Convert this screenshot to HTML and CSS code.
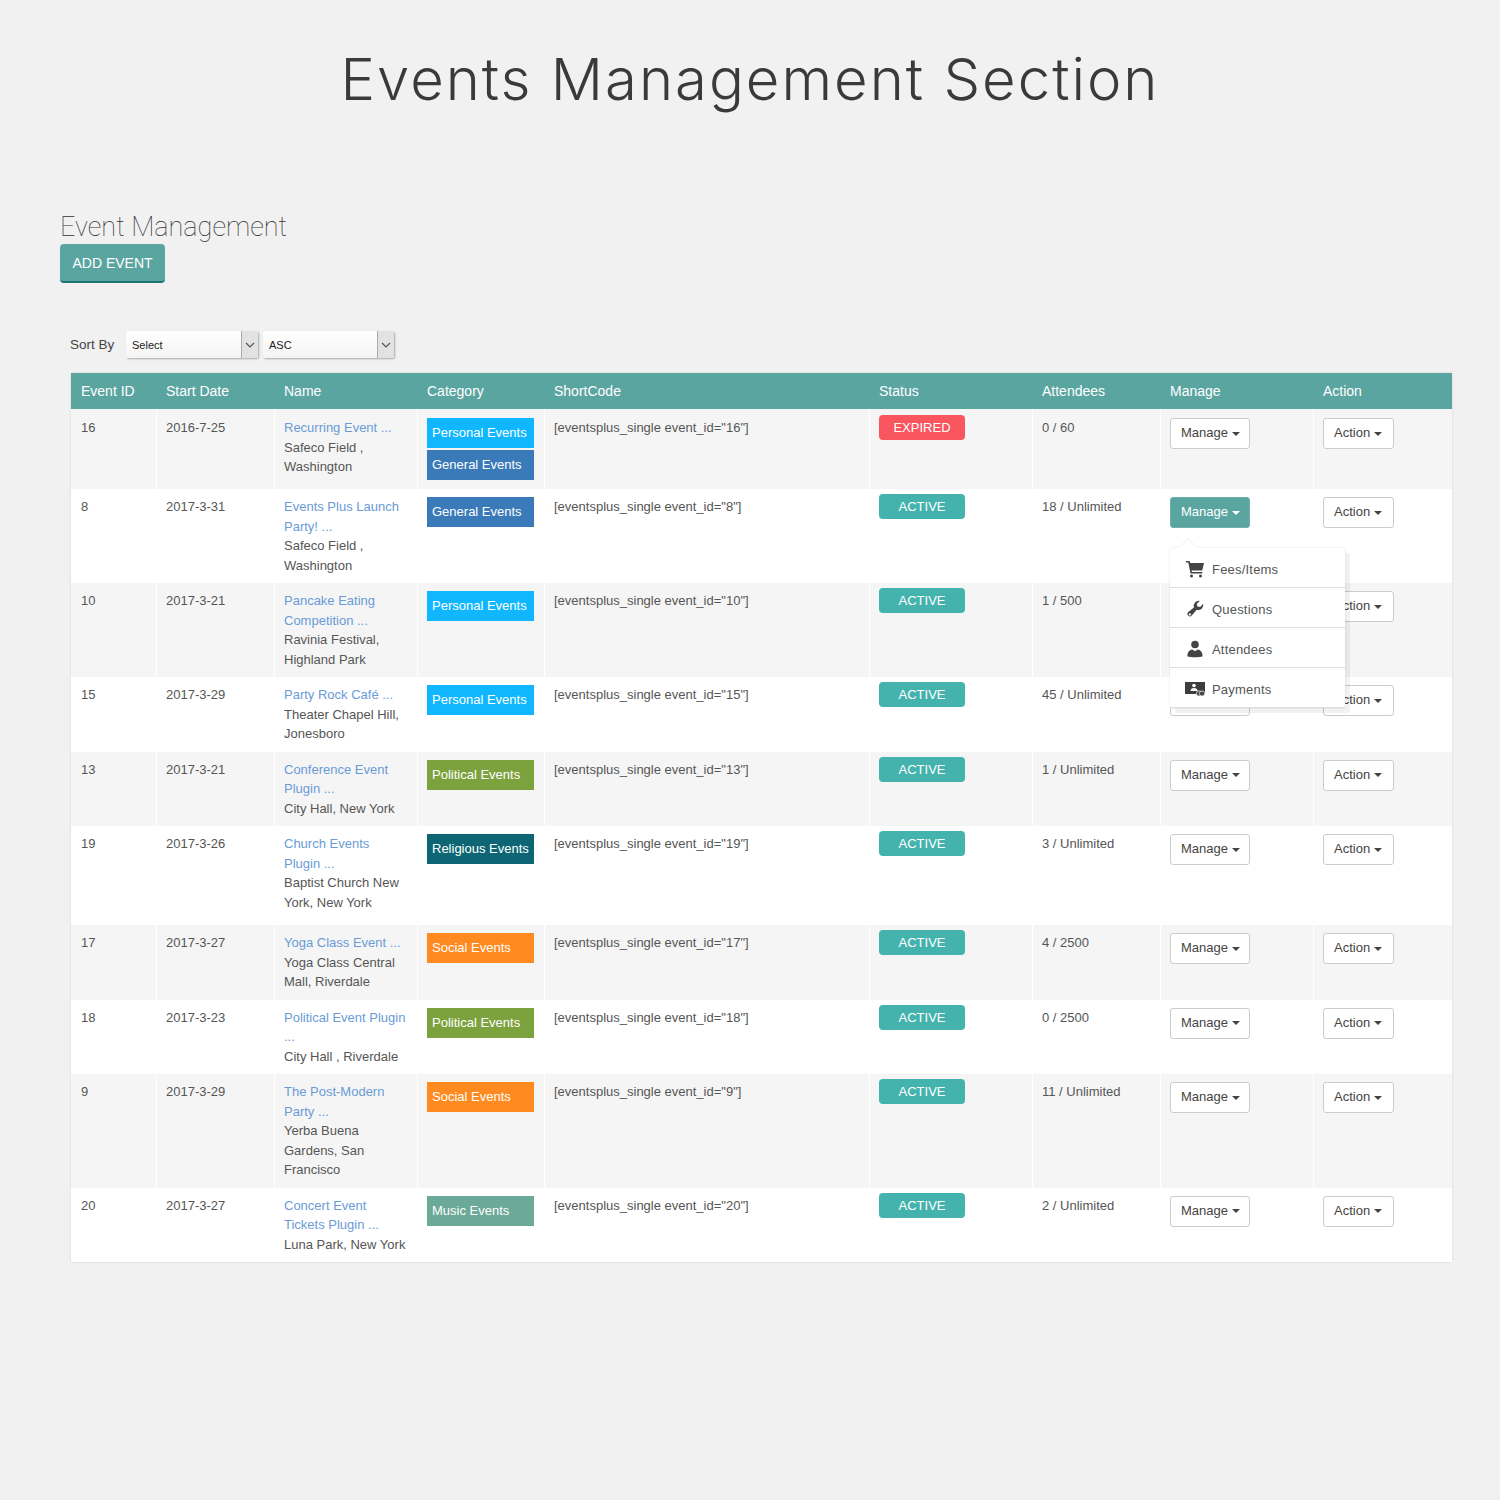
FILE: index.html
```html
<!DOCTYPE html>
<html lang="en">
<head>
<meta charset="utf-8">
<title>Events Management Section</title>
<link rel="stylesheet" href="styles.css">
</head>
<body>
<h1 class="title">Events Management Section</h1>
<main class="panel">
  <h2 class="subtitle">Event Management</h2>
  <a class="add-btn">ADD EVENT</a>
  <div class="toolbar">
    <span class="sort-label">Sort By</span>
    <div class="select sel-a"><span class="sel-text">Select</span><span class="sel-arrow"><svg width="10" height="6" viewBox="0 0 10 6"><path d="M1 1l4 4 4-4" fill="none" stroke="#555" stroke-width="1.2"/></svg></span></div>
    <div class="select sel-b"><span class="sel-text">ASC</span><span class="sel-arrow"><svg width="10" height="6" viewBox="0 0 10 6"><path d="M1 1l4 4 4-4" fill="none" stroke="#555" stroke-width="1.2"/></svg></span></div>
  </div>
  <table class="events">
    <colgroup>
      <col class="c1"><col class="c2"><col class="c3"><col class="c4"><col class="c5"><col class="c6"><col class="c7"><col class="c8"><col class="c9">
    </colgroup>
    <thead>
      <tr><th>Event ID</th><th>Start Date</th><th>Name</th><th>Category</th><th>ShortCode</th><th>Status</th><th>Attendees</th><th>Manage</th><th>Action</th></tr>
    </thead>
    <tbody>
      <tr>
        <td>16</td><td>2016-7-25</td>
        <td><a class="ev-link">Recurring Event ...</a><br>Safeco Field , Washington</td>
        <td><span class="cat personal">Personal Events</span><span class="cat general">General Events</span></td>
        <td>[eventsplus_single event_id="16"]</td>
        <td><span class="status expired">EXPIRED</span></td>
        <td>0 / 60</td>
        <td><button class="btn">Manage <i class="caret"></i></button></td>
        <td><button class="btn">Action <i class="caret"></i></button></td>
      </tr>
      <tr>
        <td>8</td><td>2017-3-31</td>
        <td><a class="ev-link">Events Plus Launch Party! ...</a><br>Safeco Field , Washington</td>
        <td><span class="cat general">General Events</span></td>
        <td>[eventsplus_single event_id="8"]</td>
        <td><span class="status">ACTIVE</span></td>
        <td>18 / Unlimited</td>
        <td>
          <div class="dd">
            <button class="btn open">Manage <i class="caret"></i></button>
            <ul class="menu">
              <li><svg class="mi" width="20" height="18" viewBox="0 0 20 18"><path d="M1 1h3.6l.6 2H19l-1.800 7.600H6.600l.3 1.400h10.400v1.600H5.500L3.300 2.600H1z" fill="#444"/><circle cx="6.500" cy="16" r="1.500" fill="#444"/><circle cx="15.500" cy="16" r="1.500" fill="#444"/></svg><span>Fees/Items</span></li>
              <li><svg class="mi" width="20" height="18" viewBox="0 0 18 18"><path fill-rule="evenodd" d="M17.200 3.700a5 5 0 0 1-6.500 6L5.800 15.600A2.500 2.500 0 1 1 2 12.300l5.900-4.900A5 5 0 0 1 13.800 1l-3 2.800.6 2.700 2.700.6zM3.900 13.300a1.100 1.100 0 1 0 .01 0z" fill="#444"/></svg><span>Questions</span></li>
              <li><svg class="mi" width="20" height="18" viewBox="0 0 18 18"><circle cx="9" cy="4.500" r="3.800" fill="#444"/><path d="M1.500 16.500c-.3-4 1.500-6.300 4.800-7l2.700 1.800 2.700-1.800c3.300.7 5.100 3 4.800 7-3 1-12 1-15 0z" fill="#444"/></svg><span>Attendees</span></li>
              <li><svg class="mi" width="20" height="18" viewBox="0 0 20 18"><path d="M0 2h20v12H0z" fill="#3d3d3d"/><circle cx="9" cy="5.500" r="1.800" fill="#fff"/><path d="M5.500 11c0-2 1.500-3 3.500-3s3.500 1 3.500 3z" fill="#fff"/><circle cx="14" cy="13.500" r="2.600" fill="#444" stroke="#fff" stroke-width=".7"/><circle cx="17" cy="13.500" r="2.600" fill="#444" stroke="#fff" stroke-width=".7"/></svg><span>Payments</span></li>
            </ul>
          </div>
        </td>
        <td><button class="btn">Action <i class="caret"></i></button></td>
      </tr>
      <tr>
        <td>10</td><td>2017-3-21</td>
        <td><a class="ev-link">Pancake Eating Competition ...</a><br>Ravinia Festival, Highland Park</td>
        <td><span class="cat personal">Personal Events</span></td>
        <td>[eventsplus_single event_id="10"]</td>
        <td><span class="status">ACTIVE</span></td>
        <td>1 / 500</td>
        <td><button class="btn">Manage <i class="caret"></i></button></td>
        <td><button class="btn">Action <i class="caret"></i></button></td>
      </tr>
      <tr>
        <td>15</td><td>2017-3-29</td>
        <td><a class="ev-link">Party Rock Café ...</a><br>Theater Chapel Hill, Jonesboro</td>
        <td><span class="cat personal">Personal Events</span></td>
        <td>[eventsplus_single event_id="15"]</td>
        <td><span class="status">ACTIVE</span></td>
        <td>45 / Unlimited</td>
        <td><button class="btn">Manage <i class="caret"></i></button></td>
        <td><button class="btn">Action <i class="caret"></i></button></td>
      </tr>
      <tr>
        <td>13</td><td>2017-3-21</td>
        <td><a class="ev-link">Conference Event Plugin ...</a><br>City Hall, New York</td>
        <td><span class="cat political">Political Events</span></td>
        <td>[eventsplus_single event_id="13"]</td>
        <td><span class="status">ACTIVE</span></td>
        <td>1 / Unlimited</td>
        <td><button class="btn">Manage <i class="caret"></i></button></td>
        <td><button class="btn">Action <i class="caret"></i></button></td>
      </tr>
      <tr class="tall">
        <td>19</td><td>2017-3-26</td>
        <td><a class="ev-link">Church Events Plugin ...</a><br>Baptist Church New York, New York</td>
        <td><span class="cat religious">Religious Events</span></td>
        <td>[eventsplus_single event_id="19"]</td>
        <td><span class="status">ACTIVE</span></td>
        <td>3 / Unlimited</td>
        <td><button class="btn">Manage <i class="caret"></i></button></td>
        <td><button class="btn">Action <i class="caret"></i></button></td>
      </tr>
      <tr>
        <td>17</td><td>2017-3-27</td>
        <td><a class="ev-link">Yoga Class Event ...</a><br>Yoga Class Central Mall, Riverdale</td>
        <td><span class="cat social">Social Events</span></td>
        <td>[eventsplus_single event_id="17"]</td>
        <td><span class="status">ACTIVE</span></td>
        <td>4 / 2500</td>
        <td><button class="btn">Manage <i class="caret"></i></button></td>
        <td><button class="btn">Action <i class="caret"></i></button></td>
      </tr>
      <tr>
        <td>18</td><td>2017-3-23</td>
        <td><a class="ev-link">Political Event Plugin ...</a><br>City Hall , Riverdale</td>
        <td><span class="cat political">Political Events</span></td>
        <td>[eventsplus_single event_id="18"]</td>
        <td><span class="status">ACTIVE</span></td>
        <td>0 / 2500</td>
        <td><button class="btn">Manage <i class="caret"></i></button></td>
        <td><button class="btn">Action <i class="caret"></i></button></td>
      </tr>
      <tr>
        <td>9</td><td>2017-3-29</td>
        <td><a class="ev-link">The Post-Modern Party ...</a><br>Yerba Buena Gardens, San Francisco</td>
        <td><span class="cat social">Social Events</span></td>
        <td>[eventsplus_single event_id="9"]</td>
        <td><span class="status">ACTIVE</span></td>
        <td>11 / Unlimited</td>
        <td><button class="btn">Manage <i class="caret"></i></button></td>
        <td><button class="btn">Action <i class="caret"></i></button></td>
      </tr>
      <tr>
        <td>20</td><td>2017-3-27</td>
        <td><a class="ev-link">Concert Event Tickets Plugin ...</a><br>Luna Park, New York</td>
        <td><span class="cat music">Music Events</span></td>
        <td>[eventsplus_single event_id="20"]</td>
        <td><span class="status">ACTIVE</span></td>
        <td>2 / Unlimited</td>
        <td><button class="btn">Manage <i class="caret"></i></button></td>
        <td><button class="btn">Action <i class="caret"></i></button></td>
      </tr>
    </tbody>
  </table>
</main>
</body>
</html>
```
FILE: styles.css
```css
* { box-sizing: border-box; }
html, body { margin: 0; padding: 0; }
body {
  width: 1500px;
  min-height: 1500px;
  background: #f1f1f1;
  color: #555;
  font-family: "Liberation Sans", Arial, sans-serif;
  font-size: 13px;
  line-height: 19.5px;
}
.title {
  margin: 41px 0 0;
  text-align: center;
  font-family: Inter, Lato, sans-serif;
  font-weight: 300;
  font-size: 58px;
  line-height: 76px;
  letter-spacing: 2px;
  color: #3a3a3a;
}
.panel { padding-left: 60px; }
.subtitle {
  margin: 93px 0 0;
  font-family: Roboto, sans-serif;
  font-weight: 100;
  font-size: 27px;
  line-height: 34px;
  color: #333;
}
.add-btn {
  display: inline-block;
  width: 105px;
  height: 39px;
  background: #5ba5a1;
  border-bottom: 2px solid #1f7378;
  border-radius: 4px;
  color: #fff;
  font-size: 14px;
  line-height: 38px;
  text-align: center;
}
.toolbar {
  display: flex;
  align-items: center;
  margin: 48px 0 0 10px;
  height: 27px;
}
.sort-label { width: 56px; color: #444; font-size: 13.500px; }
.select {
  display: flex;
  height: 27px;
  margin-right: 5px;
  background: linear-gradient(#fff, #f4f4f4);
  border-radius: 2px;
  box-shadow: 1px 1px 2px rgba(0,0,0,.3);
  font-size: 11px;
  color: #222;
}
.sel-a { width: 132px; }
.sel-b { width: 131px; }
.sel-text { flex: 1; padding: 0 6px; line-height: 28px; }
.sel-arrow {
  width: 17px;
  display: flex;
  align-items: center;
  justify-content: center;
  background: #e2e2e2;
  border-left: 1px solid #aaa;
  border-radius: 0 2px 2px 0;
}
.events {
  width: 1381px;
  margin: 15px 0 0 11px;
  table-layout: fixed;
  border-collapse: separate;
  border-spacing: 0;
  background: #fff;
  box-shadow: 0 0 2px rgba(0,0,0,.12);
}
.c1 { width: 85px; } .c2 { width: 118px; } .c3 { width: 143px; }
.c4 { width: 127px; } .c5 { width: 325px; } .c6 { width: 163px; }
.c7 { width: 128px; } .c8 { width: 153px; } .c9 { width: 139px; }
.events th {
  height: 36px;
  padding: 1px 0 0 10px;
  background: #5ba5a1;
  color: #fff;
  font-weight: 400;
  font-size: 14px;
  text-align: left;
}
.events td {
  padding: 8px 9px;
  border-left: 1px solid #fff;
  vertical-align: top;
}
.events td:first-child { padding-left: 10px; border-left: 0; }
.events tbody tr:first-child td { padding-top: 9px; padding-bottom: 7px; }
.events tbody tr:nth-child(odd) td { background: #f5f5f5; }
.events tr.tall { height: 99px; }
.ev-link { color: #6a9bd6; }
.cat {
  display: block;
  width: 107px;
  height: 30px;
  margin-bottom: 2px;
  padding-left: 5px;
  color: #fff;
  line-height: 29px;
  white-space: nowrap;
}
.personal { background: #10b7ff; }
.general { background: #3a7ab8; }
.political { background: #7ca23e; }
.religious { background: #0e6674; }
.social { background: #ff8a20; }
.music { background: #6ba998; }
.status {
  display: block;
  width: 86px;
  height: 25px;
  margin-top: -3px;
  background: #45b3ad;
  border-radius: 4px;
  color: #fff;
  line-height: 25px;
  text-align: center;
}
.status.expired { background: #f9565f; }
.btn {
  display: block;
  height: 31px;
  padding: 0 0 2px 10px;
  background: #fff;
  border: 1px solid #ccc;
  border-radius: 3px;
  color: #444;
  font-family: inherit;
  font-size: 13px;
  line-height: 19px;
  text-align: left;
  white-space: nowrap;
}
.events td:nth-child(8) .btn { width: 80px; }
.events td:nth-child(9) .btn { width: 71px; }
.btn.open { background: #5ba5a1; border-color: #6fb0ac; color: #fff; }
.caret {
  display: inline-block;
  vertical-align: middle;
  border-top: 4px solid currentColor;
  border-left: 4px solid transparent;
  border-right: 4px solid transparent;
}
.dd { position: relative; }
.menu {
  position: absolute;
  top: 51px;
  left: 0;
  z-index: 5;
  width: 175px;
  margin: 0;
  padding: 0;
  list-style: none;
  background: #fff;
  border-radius: 2px;
  box-shadow: 5px 5px 0 rgba(0,0,0,.05), 0 0 2px rgba(0,0,0,.15);
}
.menu::before {
  content: "";
  position: absolute;
  top: -6px;
  left: 12px;
  width: 12px;
  height: 12px;
  background: #fff;
  transform: rotate(45deg);
  box-shadow: -1px -1px 1px rgba(0,0,0,.05);
}
.menu li {
  position: relative;
  display: flex;
  align-items: center;
  height: 40px;
  padding-left: 15px;
  border-bottom: 1px solid #ddd;
  color: #555;
  letter-spacing: .2px;
}
.menu span { padding-top: 4px; }
.mi { margin: 2px 7px 0 0; flex: none; }
```
